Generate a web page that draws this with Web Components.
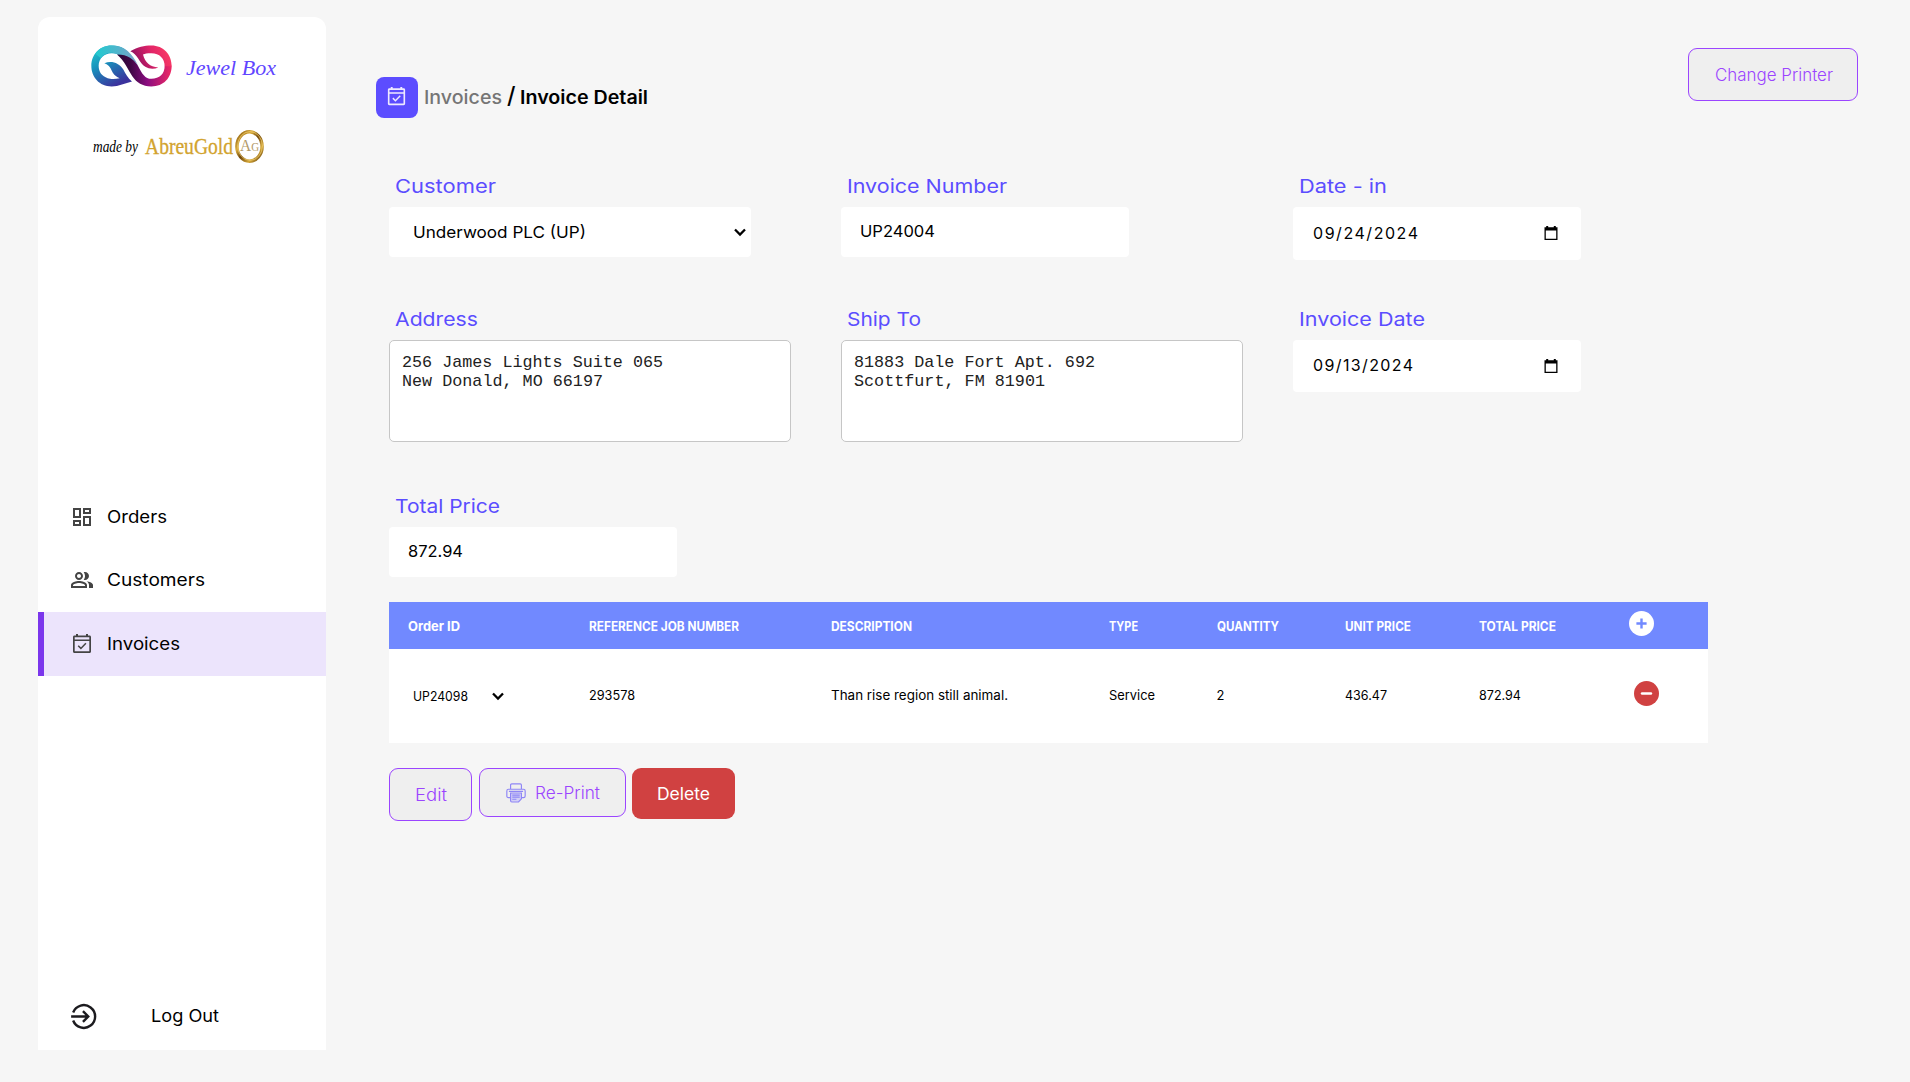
<!DOCTYPE html>
<html lang="en"><head><meta charset="utf-8"><title>Jewel Box - Invoice Detail</title>
<style>
html,body{margin:0;height:100%}
body{background:#f6f6f6;color:#000;font-family:Inter,"Open Sans",sans-serif;overflow:hidden}
</style></head><body>
<jewel-app></jewel-app>
<script>
// Base class: attaches a shadow root with the element's styles and markup.
class Base extends HTMLElement{
  connectedCallback(){
    if(this.shadowRoot)return;
    const t=document.createElement('template');
    t.innerHTML='<style>*{box-sizing:border-box}'+this.css()+'</style>'+this.html();
    this.attachShadow({mode:'open'}).append(t.content.cloneNode(true));
    this.ready();
  }
  css(){return ''} html(){return '<slot></slot>'} ready(){}
  a(n,d=''){return this.getAttribute(n)??d}
}
// One line of text fitted to the given width: by glyph width, or by tracking when "track" is set.
customElements.define('fit-text',class extends Base{
  css(){return `:host{display:block;flex:none;white-space:pre;width:${this.a('w')}px}span{display:inline-block;transform-origin:0 50%}`}
  html(){return '<span><slot></slot></span>'}
  ready(){const s=this.shadowRoot.querySelector('span'),n=this.textContent.length,w=+this.a('w'),m=s.getBoundingClientRect().width;
    if(this.hasAttribute('track')){if(n>1)s.style.letterSpacing=((w-m)/(n-1)).toFixed(3)+'px';}
    else if(n>1)s.style.transform=`scaleX(${(w/m).toFixed(4)})`;}
});
const ICONS={
 dashboard:'<path fill="currentColor" d="M19 5v2h-4V5h4M9 5v6H5V5h4m10 8v6h-4v-6h4M9 17v2H5v-2h4M21 3h-8v6h8V3zM11 3H3v10h8V3zm10 8h-8v10h8V11zm-10 4H3v6h8v-6z"/>',
 people:'<path fill="currentColor" d="M16.67 13.13C18.04 14.06 19 15.32 19 17v3h4v-3c0-2.18-3.57-3.47-6.33-3.87zM15 12c2.21 0 4-1.79 4-4s-1.79-4-4-4c-.47 0-.91.1-1.33.24C14.5 5.27 15 6.58 15 8s-.5 2.73-1.33 3.76c.42.14.86.24 1.33.24zM9 12c2.21 0 4-1.79 4-4s-1.79-4-4-4-4 1.790-4 4 1.790 4 4 4zm0-6c1.1 0 2 .9 2 2s-.9 2-2 2-2-.9-2-2 .9-2 2-2zM9 13c-2.670 0-8 1.340-8 4v3h16v-3c0-2.660-5.330-4-8-4zm6 5H3v-.99C3.200 16.290 6.300 15 9 15s5.800 1.290 6 2v1z"/>',
 event:'<path fill="currentColor" d="M19.500 3.500H18V2h-2v1.500H8V2H6v1.500H4.500C3.600 3.500 3 4.200 3 5v14.500c0 .9.600 1.500 1.500 1.500h15c.9 0 1.500-.600 1.500-1.500V5c0-.8-.600-1.500-1.500-1.500zM19.300 19.300H4.700V9h14.600zm0-11.800H4.700V5.200h14.600z"/><path fill="none" stroke="currentColor" stroke-width="1.500" d="M8.200 13.700l2.700 2.700 5-5.200"/>',
 logout:'<g fill="none" stroke="#1c1b1f" stroke-width="2.150"><path d="M2.800 8.400a10.100 10.100 0 1 1 0 7.200"/><path d="M1 12h15M11.500 7.300l4.700 4.700-4.700 4.700"/></g>',
 chevron:'<path d="M7 9.500l5 5 5-5" fill="none" stroke="#000" stroke-width="2.300"/>',
 date:'<path fill="#000" d="M7.200 5h2v1.300h5.600V5h2v1.300h1.700V19h-13V6.300h1.700zM6.800 9.500v8.200h10.400V9.500z"/>',
 plus:'<circle cx="12" cy="12" r="12" fill="#fff"/><path d="M12 7.100v9.800M7.100 12h9.800" stroke="#7189ff" stroke-width="2.300"/>',
 minus:'<circle cx="12" cy="12" r="12" fill="#d04141"/><path d="M7.800 12h8.400" stroke="#fff" stroke-width="2.600" stroke-linecap="round"/>',
 printer:'<g fill="none" stroke="#8f86f6" stroke-width="1.400"><path d="M5.500 7.500V2.500q0-1.500 1.500-1.500h10q1.500 0 1.500 1.500v5M5.500 17.500H3Q1 17.500 1 15.500V9.500q0-2 2-2h18q2 0 2 2v6q0 2-2 2h-2.500"/><path fill="#d3d0f6" d="M5.500 12h13V19l-3.500 3.800H7Q5.500 22.800 5.500 21z"/><path d="M3.500 10h17M7.500 14.500h9M7.500 17h9M7.500 19.500h5"/></g>'
};
customElements.define('ui-icon',class extends Base{
  css(){const s=this.a('size','24');return `:host{display:block;flex:none;width:${s}px;height:${s}px}svg{display:block;width:100%;height:100%}`}
  html(){return `<svg viewBox="0 0 24 24">${ICONS[this.a('name')]}</svg>`}
});
customElements.define('brand-mark',class extends Base{
  css(){return ':host{display:block;flex:none;width:81px;height:42px}svg{display:block}'}
  html(){return `<svg width="81" height="42" viewBox="182 104 243 125"><defs>
   <linearGradient id="b" x1="0" y1="0" x2=".55" y2="1"><stop offset="0" stop-color="#25d0cf"/><stop offset=".45" stop-color="#1794bd"/><stop offset="1" stop-color="#3b329d"/></linearGradient>
   <linearGradient id="t" x1="0" x2="1"><stop offset="0" stop-color="#1fcbd0"/><stop offset="1" stop-color="#7d9fc7"/></linearGradient>
   <linearGradient id="r" x1="0" y1=".4" x2="1" y2=".15"><stop offset="0" stop-color="#8b1060"/><stop offset=".5" stop-color="#e02468"/><stop offset="1" stop-color="#ff3f63"/></linearGradient>
   <linearGradient id="p" x1="0" y1="0" x2="1" y2="0"><stop offset="0" stop-color="#2a0535"/><stop offset=".25" stop-color="#3f0845"/><stop offset=".55" stop-color="#8a0d80"/><stop offset="1" stop-color="#ef2863"/></linearGradient></defs>
   <path fill="url(#b)" d="M305 213C292 202 286 190 279 177C266 157 244 150 222 158C238 163 242 176 247 186C252 195 260 200 268 203C255 206 240 206 232 203C215 198 205 185 205 166C205 143 222 128 244 128C258 128 270 132 280 142L290 122C278 110 262 105 244 105C207 105 183 133 183 166C183 200 207 228 244 228C265 228 285 218 305 213Z"/>
   <path fill="url(#p)" d="M260 132C270 126 302 130 322 164C335 190 345 205 363 205C388 205 403 190 403 166L424 166C424 202 400 228 363 228C336 228 319 216 307 199C293 178 282 150 260 132Z"/>
   <path fill="url(#t)" d="M195 130C207 112 223 105 244 105C285 105 305 130 323 164C307 145 292 132 262 132C242 122 221 128 212 143Z"/>
   <path fill="url(#r)" d="M300 122C323 109 341 105 363 105C400 105 424 132 424 167L403 167C403 144 388 128 363 128C350 128 344 129 338 132C345 157 358 169 384 171C371 177 356 176 345 169C327 157 321 130 300 122Z"/></svg>`}
});
customElements.define('gold-ring',class extends Base{
  css(){return ':host{display:grid;place-items:center;width:29px;height:33px;flex:none;margin:1px 0 0 2px}svg,fit-text{grid-area:1/1}fit-text{font:17px/20px "Liberation Serif",serif;color:#b39a68}small{font-size:12px}'}
  html(){return `<svg width="29" height="33" viewBox="0 0 28 32"><defs><linearGradient id="g" x1="0" y1="0" x2="1" y2="1"><stop offset="0" stop-color="#8a5a0c"/><stop offset=".3" stop-color="#d8ab3c"/><stop offset=".5" stop-color="#71470a"/><stop offset=".75" stop-color="#d7a93a"/><stop offset="1" stop-color="#5e3a08"/></linearGradient></defs><ellipse cx="14" cy="16" rx="12.200" ry="14.200" fill="none" stroke="url(#g)" stroke-width="3.400"/><ellipse cx="14.500" cy="15.500" rx="12" ry="14" fill="none" stroke="#f0cf72" stroke-width=".7"/></svg><fit-text w="19">A<small>G</small></fit-text>`}
});
customElements.define('nav-item',class extends Base{
  css(){return `:host{display:flex;align-items:center;height:64px;padding-left:32px;gap:13px;font-size:17px;line-height:24px;color:#000}
  :host([active]){background:#ece4fc;border-left:6px solid #7b36ec;padding-left:26px}ui-icon{color:#444;margin-left:-.500px;margin-right:.500px}`}
  html(){return `<ui-icon name="${this.a('icon')}"></ui-icon><fit-text w="${this.a('w')}">${this.a('label')}</fit-text>`}
});
customElements.define('side-bar',class extends Base{
  css(){return `:host{display:flex;flex-direction:column;flex:none;width:288px;height:1033px;margin:17px 0 0 38px;background:#fff;border-radius:12px 12px 0 0}
  .brand{display:flex;padding:28px 0 0 53px;gap:14px;height:110px}
  .brand fit-text{font:italic 22px/30px "Liberation Serif",serif;color:#6045ff;padding-top:8px}
  .maker{display:flex;align-items:center;height:38px;padding-left:55px;gap:7px}
  .maker .m{font:italic 16px/22px "Liberation Serif",serif;padding-top:1px}
  .maker .g{font:22.500px/30px "Liberation Serif",serif;color:#d2a32e;-webkit-text-stroke:.300px #d2a32e;margin-right:-7px;padding-top:2px}
  nav{margin-top:319px}nav :first-child{height:65px;margin-bottom:-1px}
  .out{display:flex;align-items:center;margin-top:auto;height:68px;padding-left:32px;gap:54px;font-size:17px;line-height:24px}`}
  html(){return `<div class="brand"><brand-mark></brand-mark><fit-text w="90">Jewel Box</fit-text></div>
  <div class="maker"><fit-text class="m" w="45">made by</fit-text><fit-text class="g" w="88">AbreuGold</fit-text><gold-ring></gold-ring></div>
  <nav><nav-item icon="dashboard" label="Orders" w="60"></nav-item><nav-item icon="people" label="Customers" w="98"></nav-item><nav-item active icon="event" label="Invoices" w="73"></nav-item></nav>
  <div class="out"><ui-icon name="logout" size="27"></ui-icon><fit-text w="68">Log Out</fit-text></div>`}
});
customElements.define('ui-button',class extends Base{
  css(){return `:host{display:flex;flex:none;align-items:center;justify-content:center;gap:9px;width:${this.a('bw')}px;height:${this.a('bh')}px;border:1px solid #9b45ff;border-radius:9px;background:#efefef;color:#9b45ff;font-size:17px;font-weight:300;line-height:24px;box-sizing:border-box;padding-left:1px}
  ui-icon{margin-left:1px}
  :host([danger]){background:#d04141;border:0;color:#fff;font-weight:400;padding:0}`}
  html(){return (this.a('icon')?`<ui-icon name="${this.a('icon')}" size="20"></ui-icon>`:'')+`<fit-text w="${this.a('w')}">${this.a('label')}</fit-text>`}
});
customElements.define('bread-crumb',class extends Base{
  css(){return `:host{display:flex;align-items:center;height:41px;font-size:18.500px;font-weight:500;line-height:30px}
  fit-text{margin-top:-1.500px}
  .tile{display:flex;width:42px;height:41px;border-radius:8px;background:#5c4dff;color:#eeeaff;padding:8px 0 0 9px;margin-right:6px}
  .s{font-size:23px;margin:-3px 5px 0 5px}.p{color:#757575}.d{font-weight:600}`}
  html(){return `<div class="tile"><ui-icon name="event" size="23"></ui-icon></div><fit-text class="p" w="78">Invoices</fit-text><fit-text class="s" w="8">/</fit-text><fit-text class="d" w="128">Invoice Detail</fit-text>`}
});
customElements.define('form-field',class extends Base{
  css(){return `:host{display:block}
  .l{height:36px;padding:1px 0 0 5.500px;font-size:18.700px;font-weight:430;line-height:30px;color:#5b4dff}
  .box{display:flex;align-items:center;justify-content:space-between;background:#fff;border-radius:4px;height:50px;width:288px;padding:0 0 1px 18.500px;font-size:16.500px;line-height:24px}
  .text{padding-bottom:2px}
  .select{width:362px;padding:0 0 1px 24px}.select ui-icon{margin:1px -1px 0 0}
  .date{height:${this.a('bh','53')}px;padding:0 18px 2px 20px;font-size:16px}.date ui-icon{margin-top:1px}
  .area{display:block;width:402px;height:102px;border:1px solid #c6c6c6;border-radius:5px;padding:12px 0 0 12px;font:16.600px/19px "Liberation Mono",monospace;color:#222}`}
  html(){const k=this.a('kind','text'),v=this.a('value').split('|'),w=this.a('w').split('|');
   return `<div class="l"><fit-text w="${this.a('lw')}">${this.a('label')}</fit-text></div><div class="box ${k}">${v.map((x,i)=>`<fit-text ${k=='date'?'track':''} w="${w[i]}">${x}</fit-text>`).join('')}${k=='select'?'<ui-icon name="chevron"></ui-icon>':k=='date'?'<ui-icon name="date"></ui-icon>':''}</div>`}
});
customElements.define('order-table',class extends Base{
  css(){return `:host{display:block;width:1319px;margin-left:13px;background:#fff;font-size:13px;line-height:20px}
  .r{display:grid;grid-template-columns:181px 242px 278px 108px 128px 134px 155px 1fr;padding-left:18px;align-items:center;height:94px}
  .r>fit-text{padding-left:.500px}.h{height:47px;background:#7189ff;color:#fff;font-weight:700}.b>fit-text{margin-top:-2px}
  .c{display:flex;align-items:center;padding-left:6px;gap:18px}.h ui-icon{margin:-5px 0 0 -4px}.b ui-icon.x{margin:-5px 0 0 1px}`}
  html(){const h=[['Order ID',52],['REFERENCE JOB NUMBER',150],['DESCRIPTION',81],['TYPE',29],['QUANTITY',62],['UNIT PRICE',66],['TOTAL PRICE',77]];
   const b=[['293578',46],['Than rise region still animal.',177],['Service',46],['2',8],['436.47',42],['872.94',42]];
   const f=x=>`<fit-text w="${x[1]}">${x[0]}</fit-text>`;
   return `<div class="r h">${h.map(f).join('')}<ui-icon name="plus" size="25"></ui-icon></div><div class="r b"><div class="c"><fit-text w="55">UP24098</fit-text><ui-icon name="chevron"></ui-icon></div>${b.map(f).join('')}<ui-icon class="x" name="minus" size="25"></ui-icon></div>`}
});
customElements.define('jewel-app',class extends Base{
  css(){return `:host{display:flex;width:1910px;height:1082px}
  main{flex:1;padding-left:50px}
  .top{display:flex;justify-content:space-between;align-items:flex-start;height:171px;padding-right:52px}
  bread-crumb{margin-top:77px}.top ui-button{margin-top:48px}
  .grid{display:grid;grid-template-columns:452px 452px 452px;grid-template-rows:133px 187px 111px;padding-left:13px}
  .actions{display:flex;align-items:flex-start;padding:25px 0 0 13px;gap:6.500px}`}
  html(){return `<side-bar></side-bar><main>
  <div class="top"><bread-crumb></bread-crumb><ui-button bw="170" bh="53" w="118" label="Change Printer"></ui-button></div>
  <div class="grid">
   <form-field label="Customer" lw="101" kind="select" value="Underwood PLC (UP)" w="173"></form-field>
   <form-field label="Invoice Number" lw="160" value="UP24004" w="75"></form-field>
   <form-field label="Date - in" lw="88" kind="date" value="09/24/2024" w="105"></form-field>
   <form-field label="Address" lw="83" kind="area" value="256 James Lights Suite 065|New Donald, MO 66197" w="261|201"></form-field>
   <form-field label="Ship To" lw="74" kind="area" value="81883 Dale Fort Apt. 692|Scottfurt, FM 81901" w="241|191"></form-field>
   <form-field label="Invoice Date" lw="126" kind="date" bh="52" value="09/13/2024" w="100"></form-field>
   <form-field label="Total Price" lw="105" value="872.94" w="55"></form-field>
  </div>
  <order-table></order-table>
  <div class="actions"><ui-button bw="83" bh="53" w="32" label="Edit"></ui-button><ui-button bw="147" bh="49" w="65" icon="printer" label="Re-Print"></ui-button><ui-button danger bw="103" bh="51" w="53" label="Delete"></ui-button></div>
  </main>`}
});
</script></body></html>
